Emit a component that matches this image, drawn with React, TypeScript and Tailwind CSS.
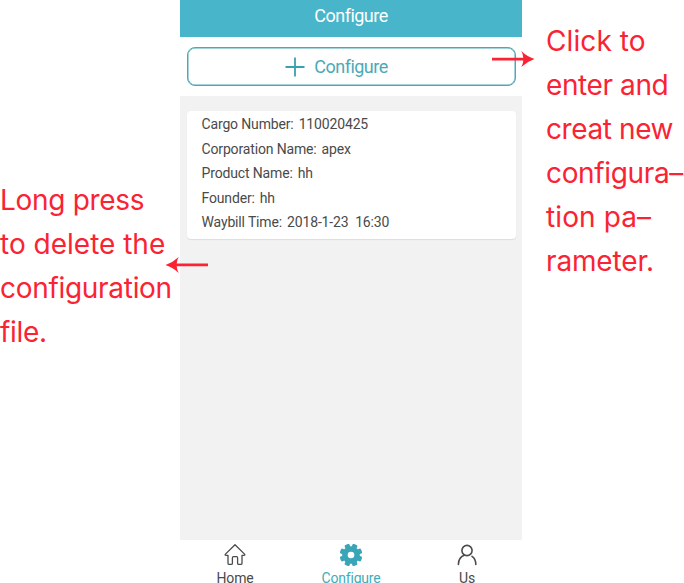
const NOTE = "flex flex-col whitespace-nowrap font-['Inter','Liberation_Sans',sans-serif] text-[28px] leading-[44px] font-[385] text-[#fa2334]";

const cargo = [
  { label: 'Cargo Number:', value: '110020425' },
  { label: 'Corporation Name:', value: 'apex' },
  { label: 'Product Name:', value: 'hh' },
  { label: 'Founder:', value: 'hh' },
  { label: 'Waybill Time:', value: '2018-1-23  16:30' },
];

function Arrow({ className }: { className: string }) {
  return (
    <svg className={className} width="43" height="16" viewBox="0 0 43 16" fill="#fa2334">
      <path d="M0 6.7H31.3Q31 3 29.3 0Q35 5.6 42.5 8Q35 10.6 29.3 16Q31 13 31.3 9.4H0Z" />
    </svg>
  );
}

function HomeIcon() {
  return (
    <svg className="shrink-0" width="22" height="22" viewBox="0 0 22 22" fill="none" stroke="#4b4b4b" strokeWidth="1.3" strokeLinejoin="round" strokeLinecap="round">
      <path d="M11 0.8L1.2 10.4Q1 11.4 2 11.4H4V19.2Q4 20.4 5.2 20.4H7.3Q8.4 20.4 8.4 19.2V14Q8.4 12.6 9.4 12.6H12.6Q13.6 12.6 13.6 14V19.2Q13.6 20.4 14.8 20.4H16.8Q18 20.4 18 19.2V11.4H20Q21 11.4 20.8 10.4Z" />
    </svg>
  );
}

function GearIcon() {
  return (
    <svg className="shrink-0" width="22" height="22" viewBox="-11 -11 22 22">
      <g fill="#39a6b8">
        <circle r="8.8" />
        {[22.5, 67.5, 112.5, 157.5, 202.5, 247.5, 292.5, 337.5].map((angle) => (
          <rect key={angle} x="-2.6" y="-11.4" width="5.2" height="6" rx="1.4" transform={`rotate(${angle})`} />
        ))}
      </g>
      <circle r="3.3" fill="#fff" />
    </svg>
  );
}

function UserIcon() {
  return (
    <svg className="shrink-0" width="22" height="22" viewBox="0 0 22 22" fill="none" stroke="#4b4b4b" strokeWidth="1.6" strokeLinecap="round">
      <circle cx="11" cy="6.5" r="5.1" />
      <path d="M8.2 11.3C4.4 12.8 2.4 16 2.4 20.4M16 12.4C18.6 14.2 19.8 16.8 19.8 20.4" />
    </svg>
  );
}

export default function App() {
  return (
    <div className="relative flex h-[583px] w-[684px] overflow-hidden bg-white">
      <aside className={`${NOTE} w-[180px] shrink-0 pt-[178px]`}>
        <span className="tracking-[-0.3px]">Long press</span>
        <span className="tracking-[0px]">to delete the</span>
        <span className="tracking-[-0.3px]">configuration</span>
        <span className="tracking-[-0.3px]">file.</span>
      </aside>

      <main className="flex w-[342px] shrink-0 flex-col bg-[#f2f2f2] font-[Roboto,sans-serif]">
        <header className="flex h-[37px] shrink-0 items-start justify-center bg-[#48b5ca] pt-[4px] text-[18px] leading-6 tracking-[-0.5px] text-white">
          <span>Configure</span>
        </header>
        <div className="h-[59px] shrink-0 bg-white pt-[10px] pr-[6px] pl-[7px]">
          <button className="flex h-[39px] w-full items-center justify-center gap-[9px] rounded-[8px] border border-[#4aaab6] pt-px pr-[30px] text-[18px] leading-6 tracking-[-0.5px] text-[#4aaab6] shadow-[inset_0_0_0_0.5px_#4aaab6]">
            <svg width="20" height="20" viewBox="0 0 20 20" stroke="#39a0b0" strokeWidth="1.8">
              <path d="M0.5 10H19.5M10 0.5V19.5" />
            </svg>
            <span>Configure</span>
          </button>
        </div>
        <section className="mt-[15px] mr-[6px] ml-[7px] flex h-[128px] shrink-0 flex-col rounded-[4px] bg-white pt-[1px] pl-[14.5px] text-[14px] leading-[24.5px] tracking-[-0.15px] text-[#4a4a4a] shadow-[0_1px_1px_rgba(0,0,0,0.09)]">
          {cargo.map(({ label, value }) => (
            <div key={label} className="flex gap-[5px] whitespace-pre">
              <span>{label}</span>
              <span>{value}</span>
            </div>
          ))}
        </section>
        <nav className="mt-auto flex h-[43px] shrink-0 justify-center bg-white pt-[4px] text-[14px] leading-[10px] tracking-[-0.2px] text-[#4a4a4a]">
          <div className="flex w-[116px] shrink-0 flex-col items-center gap-[7px]"><HomeIcon /><span>Home</span></div>
          <div className="flex w-[116px] shrink-0 flex-col items-center gap-[7px] text-[#43acba]"><GearIcon /><span>Configure</span></div>
          <div className="flex w-[116px] shrink-0 flex-col items-center gap-[7px]"><UserIcon /><span>Us</span></div>
        </nav>
      </main>

      <aside className={`${NOTE} w-[162px] shrink-0 pt-[19px] pl-[24px]`}>
        <span className="tracking-[0.1px]">Click to</span>
        <span className="tracking-[-0.4px]">enter and</span>
        <span className="tracking-[-0.4px]">creat new</span>
        <span className="tracking-[-0.35px]">configura–</span>
        <span className="tracking-[0.1px]">tion pa–</span>
        <span className="tracking-[-0.15px]">rameter.</span>
      </aside>

      <Arrow className="absolute top-[51px] left-[492px]" />
      <Arrow className="absolute top-[257px] left-[165px] rotate-180" />
    </div>
  );
}
